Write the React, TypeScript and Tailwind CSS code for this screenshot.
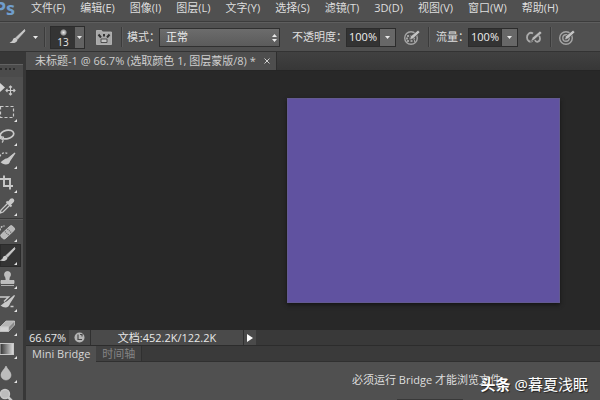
import type { ReactNode } from "react";

const menus = ["文件(F)", "编辑(E)", "图像(I)", "图层(L)", "文字(Y)", "选择(S)", "滤镜(T)", "3D(D)", "视图(V)", "窗口(W)", "帮助(H)"];

function Glyph({ children }: { children: ReactNode }) {
  return (
    <svg viewBox="0 0 18 18" className="size-[18px] shrink-0" fill="none" stroke="#c9c9c9" strokeWidth="1.4">
      {children}
    </svg>
  );
}

const brush = (
  <>
    <path d="M16.5 1.5 8 9.5l1.6 1.6L17 3z" fill="#c9c9c9" strokeWidth="0.8" />
    <path d="M8 9.8c-1.600-.3-2.800.5-3.200 2-.4 1.500-1.500 2.200-3.300 2.600 2.700 1.300 7.600.9 8.100-3z" fill="#c9c9c9" stroke="none" />
  </>
);

const selectionTools: { name: string; art: ReactNode }[] = [
  {
    name: "移动",
    art: (
      <>
        <path d="M1 2v11l6-5.500z" fill="#d4d4d4" stroke="none" />
        <path d="M12.500 6v9M8 10.500h9M11 7.500 12.500 6 14 7.500M11 13.500l1.500 1.500 1.500-1.500M9.500 9 8 10.500 9.500 12M15.500 9l1.500 1.500-1.500 1.500" strokeWidth="1.100" />
      </>
    ),
  },
  { name: "矩形选框", art: <rect x="2.500" y="3.500" width="13" height="11" strokeDasharray="3 2" strokeWidth="1.200" /> },
  {
    name: "套索",
    art: (
      <>
        <ellipse cx="9" cy="7.500" rx="6.800" ry="4.300" transform="rotate(-12 9 7.500)" strokeWidth="1.700" />
        <path d="M4 9.500c-2 .5-2 2.800 0 2.600s2-2.200.3-2.500M4.500 12c1 1.200.5 2.500-.5 3.500" strokeWidth="1.200" />
      </>
    ),
  },
  {
    name: "快速选择",
    art: (
      <>
        <path d="M2 6.500c1-3.500 5-4.500 7.500-3" strokeDasharray="2 1.500" strokeWidth="1.200" />
        <path d="M17 3 9.500 9l2 2z" fill="#c9c9c9" strokeWidth="1.200" />
        <path d="M9.800 8.500C6 8 5 11 2.500 12 5 15.500 12 15.500 12 11z" fill="#c9c9c9" stroke="none" />
      </>
    ),
  },
  { name: "裁剪", art: <path d="M6 1.500v10.500h9M2 5h10v10.500" strokeWidth="1.900" /> },
  {
    name: "吸管",
    art: (
      <>
        <path d="m10 6-7 7-1 3 3-1 7-7" strokeWidth="1.300" />
        <path d="m8.500 4.500 5 5M10.500 5.500l2.500-3c1.500-1 3 .5 2 2l-3 3z" fill="#c9c9c9" strokeWidth="1.900" />
      </>
    ),
  },
];

const paintTools: { name: string; art: ReactNode; active?: boolean }[] = [
  {
    name: "修复画笔",
    art: (
      <>
        <rect x="2" y="6.500" width="15.500" height="6" rx="2" transform="rotate(-43 9.500 9.500)" fill="#b8b8b8" strokeWidth="0.800" />
        <path d="m7 8.500 4 4M9.500 6l4 4" stroke="#6a6a6a" strokeDasharray="1 1" />
        <path d="M2 7.500c0-3 2-4.500 4.500-4.500" strokeDasharray="2 1" />
      </>
    ),
  },
  { name: "画笔", art: brush, active: true },
  {
    name: "仿制图章",
    art: <path d="M8 9c0-2-1.500-2.500-1.500-4.500a3 3 0 0 1 6 0C12.500 6.500 11 7 11 9v1.500h5v3H3v-3h5zM3 15.500h13" fill="#bdbdbd" strokeWidth="0.800" />,
  },
  {
    name: "历史记录画笔",
    art: (
      <>
        <path d="M16.500 2.500 9 9l2 2z" fill="#c9c9c9" strokeWidth="1.200" />
        <path d="M9.500 8.500C6 8.500 5 11.500 2.500 12.500 6 15.500 11.500 15 11.500 11z" fill="#c9c9c9" stroke="none" />
        <path d="M2 4h8.500L6 8.500M12.500 13.500h3" strokeWidth="1.500" />
      </>
    ),
  },
  {
    name: "橡皮擦",
    art: (
      <>
        <path d="m2 10 6-6h8.500l-6 6z" fill="#b5b5b5" strokeWidth="0.800" />
        <path d="M2 10h8.500v4.500H2z" fill="#d2d2d2" strokeWidth="0.800" />
        <path d="m10.500 10 6-6v4l-6 6.500z" fill="#8a8a8a" strokeWidth="0.800" />
      </>
    ),
  },
  {
    name: "渐变",
    art: (
      <>
        <defs>
          <linearGradient id="ramp">
            <stop offset="0" stopColor="#303030" />
            <stop offset="1" stopColor="#e0e0e0" />
          </linearGradient>
        </defs>
        <rect x="2" y="3.500" width="13.500" height="11" fill="url(#ramp)" strokeWidth="1" />
      </>
    ),
  },
  { name: "模糊", art: <path d="M8 2c1 3 5 5.500 5 9a5 5 0 0 1-10 0C3 7.500 7 5 8 2z" fill="#bcbcbc" strokeWidth="0.600" /> },
  { name: "减淡", art: <><circle cx="7" cy="7" r="4.500" fill="#bcbcbc" /><path d="m10 10 6 6" strokeWidth="2.500" /></> },
];

function Tool({ name, art, active }: { name: string; art: ReactNode; active?: boolean }) {
  return (
    <button
      aria-label={name}
      className={`relative flex w-[21px] flex-1 items-center overflow-hidden ${active ? "bg-[#343434] shadow-[inset_0_0_0_1px_#2b2b2b]" : ""}`}
    >
      <span className="-ml-0.5 flex">
        <Glyph>{art}</Glyph>
      </span>
      {name !== "移动" && (
        <svg viewBox="0 0 3 3" className="absolute right-1 bottom-0.5 size-[3px]">
          <path d="M3 0v3H0z" fill="#e4e4e4" />
        </svg>
      )}
    </button>
  );
}

function Caret() {
  return (
    <svg viewBox="0 0 5 3" className="h-[3px] w-[5px]">
      <path d="M0 0h5L2.500 3z" fill="#e8e8e8" />
    </svg>
  );
}

function Divider() {
  return <span className="h-5 w-px shrink-0 bg-[#3b3b3b] shadow-[1px_0_0_#5b5b5b]" />;
}

function Percent({ id, label }: { id: string; label: string }) {
  return (
    <div className="flex shrink-0 items-center">
      <label htmlFor={id}>{label}</label>
      <div className="-ml-px flex h-[19px] border border-[#2c2c2c]">
        <input id={id} defaultValue="100%" className="w-8 bg-[#333] text-center text-[#eee] outline-none" />
        <button aria-label={`${label}选项`} className="flex w-4 items-center justify-center border-l border-[#2c2c2c] bg-[#676767]">
          <Caret />
        </button>
      </div>
    </div>
  );
}

function Pressure({ name, checkered }: { name: string; checkered?: boolean }) {
  return (
    <button aria-label={name} className="shrink-0">
      <Glyph>
        <circle cx="8" cy="10" r="6.300" strokeWidth="1.400" stroke="#a5a5a5" />
        {checkered ? (
          <path d="M4 8h8M3 10.500h10M4 13h8" stroke="#a0a0a0" strokeWidth="2.200" strokeDasharray="2 1.500" />
        ) : (
          <circle cx="8" cy="10" r="3.200" strokeWidth="1.400" stroke="#a5a5a5" />
        )}
        <path d="m6.500 12 1.200-3.800 7.300-6 2 2L10 10.700z" fill="#c4c4c4" stroke="#505050" strokeWidth="0.700" />
      </Glyph>
    </button>
  );
}

export default function App() {
  return (
    <div className="flex h-screen flex-col overflow-hidden bg-[#505050] font-['Open_Sans','Noto_Sans_CJK_SC',sans-serif] text-[11px] leading-4 text-[#dedede]">
      <header className="flex h-[22px] shrink-0 items-start border-b border-[#3c3c3c]">
        <div className="flex h-4 w-[15px] shrink-0 items-center justify-end overflow-hidden text-lg font-bold text-[#6f9dcc]">Ps</div>
        <nav className="flex gap-[15px] pl-4 whitespace-nowrap">
          {menus.map((m) => (
            <button key={m}>{m}</button>
          ))}
        </nav>
      </header>

      <div className="flex h-[30px] shrink-0 items-center border-t border-b border-t-[#5e5e5e] border-b-[#333] pl-2 whitespace-nowrap">
        <button aria-label="画笔工具预设" className="flex shrink-0 items-center gap-[7px]">
          <Glyph>{brush}</Glyph>
          <Caret />
        </button>
        <div className="flex shrink-0 items-center gap-[5px] pl-[6px]">
          <Divider />
          <button aria-label="画笔大小 13" className="flex h-[23px] border border-[#2c2c2c] bg-[#343434]">
            <span className="flex w-6 flex-col items-center pt-0.5 text-[10px] leading-3 text-[#e6e6e6]">
              <span className="size-[7px] shrink-0 rounded-full bg-[radial-gradient(circle,#eee,#999_50%,#343434_75%)]" />
              13
            </span>
            <span className="flex h-full w-[9px] items-center justify-center bg-[#626262]">
              <Caret />
            </span>
          </button>
        </div>
        <button aria-label="画笔面板" className="ml-[10px] shrink-0">
          <Glyph>
            <path d="M1.500 2.500h5l1 1.500h9v12.500h-15z" fill="#a8a8a8" stroke="#bcbcbc" strokeWidth="0.800" />
            <path d="M3.500 6.500 6 9.500M9 6v2.500M14.500 6.500 12 9.500" stroke="#333" strokeWidth="2" />
            <path d="M6 11h6v3.500H6z" fill="#c4c4c4" stroke="#444" strokeWidth="0.900" />
          </Glyph>
        </button>
        <div className="flex items-center gap-[5px] pl-2">
          <Divider />
          <label htmlFor="mode">模式：</label>
        </div>
        <div className="relative -ml-px w-[121px] shrink-0">
          <select id="mode" className="h-[19px] w-full appearance-none border border-[#303030] bg-linear-to-b from-[#6c6c6c] to-[#5b5b5b] pl-[6px] text-[#eee] outline-none">
            <option>正常</option>
          </select>
          <svg viewBox="0 0 5 8" className="pointer-events-none absolute top-[6px] right-[3px] h-2 w-[5px]">
            <path d="M0 3h5L2.500 0zM0 5h5L2.500 8z" fill="#e8e8e8" />
          </svg>
        </div>
        <div className="flex shrink-0 items-center gap-[7px] pl-3">
          <Percent id="opacity" label="不透明度：" />
          <Pressure name="不透明度压力" checkered />
          <Divider />
          <Percent id="flow" label="流量：" />
          <button aria-label="喷枪" className="shrink-0">
            <Glyph>
              <path d="M8 5.500C5 3.500 2 6 2 9.500s3 5 5.500 3.500M10 12c1 3 5 2 5-1.500 0-1.500-.5-2.500-1.500-3" strokeWidth="1.800" stroke="#aaa" />
              <path d="m5.500 14 2-4.500 7.500-6.500 2 2-7.500 6.500z" fill="#b8b8b8" stroke="#505050" strokeWidth="0.600" />
            </Glyph>
          </button>
          <Divider />
          <Pressure name="大小压力" />
        </div>
      </div>

      <div className="flex min-h-0 flex-1 bg-[#373737]">
        <aside className="flex w-[23px] shrink-0 flex-col overflow-hidden pt-3">
          <div className="flex h-[13px] shrink-0 flex-col border-t border-[#626262] bg-[#4b4b4b] pt-[3px]">
            <div className="mr-2 h-0.5 border-t-2 border-dotted border-[#2c2c2c]" />
          </div>
          <div className="flex h-[141px] shrink-0 flex-col bg-[#505050]">
            {selectionTools.map((t) => (
              <Tool key={t.name} {...t} />
            ))}
          </div>
          <div className="h-0.5 shrink-0 border-t border-[#393939] bg-[#5b5b5b]" />
          <div className="-mb-2 flex flex-1 flex-col bg-[#505050]">
            {paintTools.map((t) => (
              <Tool key={t.name} {...t} />
            ))}
          </div>
        </aside>

        <div className="ml-[3px] flex min-w-0 flex-1 flex-col">
          <div className="flex h-[19px] shrink-0 border-b border-[#252525] bg-linear-to-b from-[#414141] to-[#373737]">
            <div className="flex items-center gap-2 border-r border-[#2e2e2e] bg-[#4e4e4e] pr-[6px] pl-[9px] whitespace-nowrap text-[#cfcfcf]">
              <span>未标题-1 @ 66.7% (选取颜色 1, 图层蒙版/8) *</span>
              <button aria-label="关闭">
                <svg viewBox="0 0 6 6" className="size-[6px]">
                  <path d="m.5.5 5 5m0-5-5 5" stroke="#cfcfcf" />
                </svg>
              </button>
            </div>
          </div>

          <main className="flex min-h-0 flex-1 items-center justify-end bg-[#282828] pr-10">
            <div className="h-[205px] w-[273px] border border-[#635a91] bg-[#6052a0] shadow-[0_2px_4px_#151515]" />
          </main>

          <div className="flex h-[15px] shrink-0 items-center bg-[#393939] whitespace-nowrap text-[#e8e8e8]">
            <span className="w-[43px] pl-[3px]">66.67%</span>
            <span className="flex h-full w-[22px] items-center justify-center border-r border-[#303030] bg-[#484848]">
              <svg viewBox="0 0 11 11" className="size-[11px]">
                <circle cx="5.500" cy="5.500" r="5" fill="#b5b5b5" />
                <path d="M4 2.500v5h4M6 2.500h2v2" fill="none" stroke="#484848" strokeWidth="1.200" />
              </svg>
            </span>
            <span className="flex h-full w-[153px] items-center justify-center border-r border-[#303030] bg-[#4a4a4a]">文档:452.2K/122.2K</span>
            <button aria-label="状态菜单" className="flex h-full w-3 items-center justify-center bg-[#4a4a4a]">
              <svg viewBox="0 0 6 8" className="h-2 w-[6px]">
                <path d="M0 0v8l6-4z" fill="#fff" />
              </svg>
            </button>
          </div>

          <section className="relative flex h-[55px] shrink-0 flex-col border-t border-[#2c2c2c] bg-[#505050]">
            <div className="flex h-4 shrink-0 bg-[#3a3a3a]">
              <button className="bg-[#505050] px-[6px] text-[#d6d6d6]">Mini Bridge</button>
              <button className="border-r border-b border-[#303030] bg-[#414141] px-[6px] text-[#858585]">时间轴</button>
              <span className="flex-1 border-b border-[#303030]" />
            </div>
            <div className="flex flex-1 flex-col items-end justify-between pt-[10px]">
              <p className="pr-[99px] whitespace-nowrap">必须运行 Bridge 才能浏览文件</p>
              <div className="mr-[137px] h-px w-[66px] bg-[#393939]" />
            </div>
            <div className="absolute right-3 bottom-2 flex items-center gap-1 text-[15px] whitespace-nowrap text-white [text-shadow:1px_1px_1px_#222]">
              <b>头条</b>
              <span>@暮夏浅眠</span>
            </div>
          </section>
        </div>
      </div>
    </div>
  );
}
